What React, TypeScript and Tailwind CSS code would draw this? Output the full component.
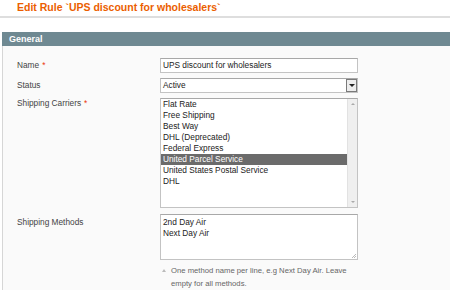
import React from 'react'

const carriers = [
  'Flat Rate',
  'Free Shipping',
  'Best Way',
  'DHL (Deprecated)',
  'Federal Express',
  'United Parcel Service',
  'United States Postal Service',
  'DHL',
]

function Label({ text, required }: { text: string; required?: boolean }) {
  return (
    <div className="w-[143px] shrink-0 text-[8.3px] leading-[11px] text-[#444]">
      {text}
      {required && <span className="ml-[3px] text-[#eb340a]">*</span>}
    </div>
  )
}

export default function App() {
  return (
    <div className="w-[450px] h-[290px] overflow-hidden bg-white font-['Liberation_Sans',Arial,sans-serif]">
      {/* page title */}
      <div className="h-[16px] pl-[17px] pt-[1px] text-[10.5px] leading-[12px] font-bold text-[#eb5e00]">
        Edit Rule `UPS discount for wholesalers`
      </div>
      <div className="h-[2px] bg-[#dedede]" />

      <div className="ml-[2px] mt-[14px]">
        <div className="h-[14px] bg-[#6f8992] pl-[7px] text-[9px] leading-[14px] font-bold text-white">
          General
        </div>
        <div className="h-[300px] border-l border-[#d6d6d6] bg-[#fafafa] pl-[14px] pt-[12px] flex flex-col">
          {/* Name */}
          <div className="flex items-center">
            <Label text="Name" required />
            <div className="w-[198px] h-[15px] border border-[#c3c3c3] border-t-[#a8a8a8] bg-white px-[2px] text-[8.3px] leading-[13px] text-[#222]">
              UPS discount for wholesalers
            </div>
          </div>

          {/* Status */}
          <div className="flex items-center mt-[5px]">
            <Label text="Status" />
            <div className="w-[198px] h-[15px] border border-[#c3c3c3] border-t-[#a8a8a8] bg-white flex items-center">
              <span className="flex-1 px-[2px] text-[8.3px] leading-[13px] text-[#222]">Active</span>
              <div className="w-[11px] h-[13px] border border-[#7a7a7a] bg-[#ededed] flex items-center justify-center">
                <div className="w-0 h-0 border-l-[3px] border-r-[3px] border-t-[3px] border-l-transparent border-r-transparent border-t-[#222]" />
              </div>
            </div>
          </div>

          {/* Shipping Carriers */}
          <div className="flex items-start mt-[5px]">
            <Label text="Shipping Carriers" required />
            <div className="w-[198px] h-[110px] border border-[#c3c3c3] border-t-[#a8a8a8] bg-white flex">
              <div className="flex-1 pt-[0px]">
                {carriers.map((c) => (
                  <div
                    key={c}
                    className={
                      c === 'United Parcel Service'
                        ? 'h-[11px] px-[2px] text-[8.3px] leading-[11px] bg-[#6b6b6b] text-white'
                        : 'h-[11px] px-[2px] text-[8.3px] leading-[11px] text-[#222]'
                    }
                  >
                    <span className={c === 'United Parcel Service' ? 'text-white' : 'text-[#222]'}>{c}</span>
                  </div>
                ))}
              </div>
              <div className="w-[10px] bg-[#efefef] border-l border-[#e2e2e2] flex flex-col items-center justify-between py-[4px]">
                <div className="w-0 h-0 border-l-[2px] border-r-[2px] border-b-[2px] border-l-transparent border-r-transparent border-b-[#aaa]" />
                <div className="w-0 h-0 border-l-[2px] border-r-[2px] border-t-[2px] border-l-transparent border-r-transparent border-t-[#aaa]" />
              </div>
            </div>
          </div>

          {/* Shipping Methods */}
          <div className="flex items-start mt-[6px]">
            <div className="pt-[3px]">
              <Label text="Shipping Methods" />
            </div>
            <div className="flex flex-col">
              <div className="relative w-[198px] h-[46px] border border-[#c3c3c3] border-t-[#a8a8a8] bg-white px-[2px] pt-[2px] text-[8.3px] leading-[11px] text-[#222]">
                <div>2nd Day Air</div>
                <div>Next Day Air</div>
                <svg className="absolute right-[1px] bottom-[1px]" width="5" height="5" viewBox="0 0 5 5">
                  <path d="M5 1 L1 5 M5 3 L3 5" stroke="#aaa" strokeWidth="0.8" />
                </svg>
              </div>
              <div className="flex mt-[4px] pl-[2px] text-[7.7px] leading-[13px] text-[#666]">
                <div className="w-[9px] pt-[5px]">
                  <div className="w-0 h-0 border-l-[2px] border-r-[2px] border-b-[3px] border-l-transparent border-r-transparent border-b-[#bbb]" />
                </div>
                <div className="w-[186px]">
                  One method name per line, e.g Next Day Air. Leave empty for all methods.
                </div>
              </div>
            </div>
          </div>
        </div>
      </div>
    </div>
  )
}
